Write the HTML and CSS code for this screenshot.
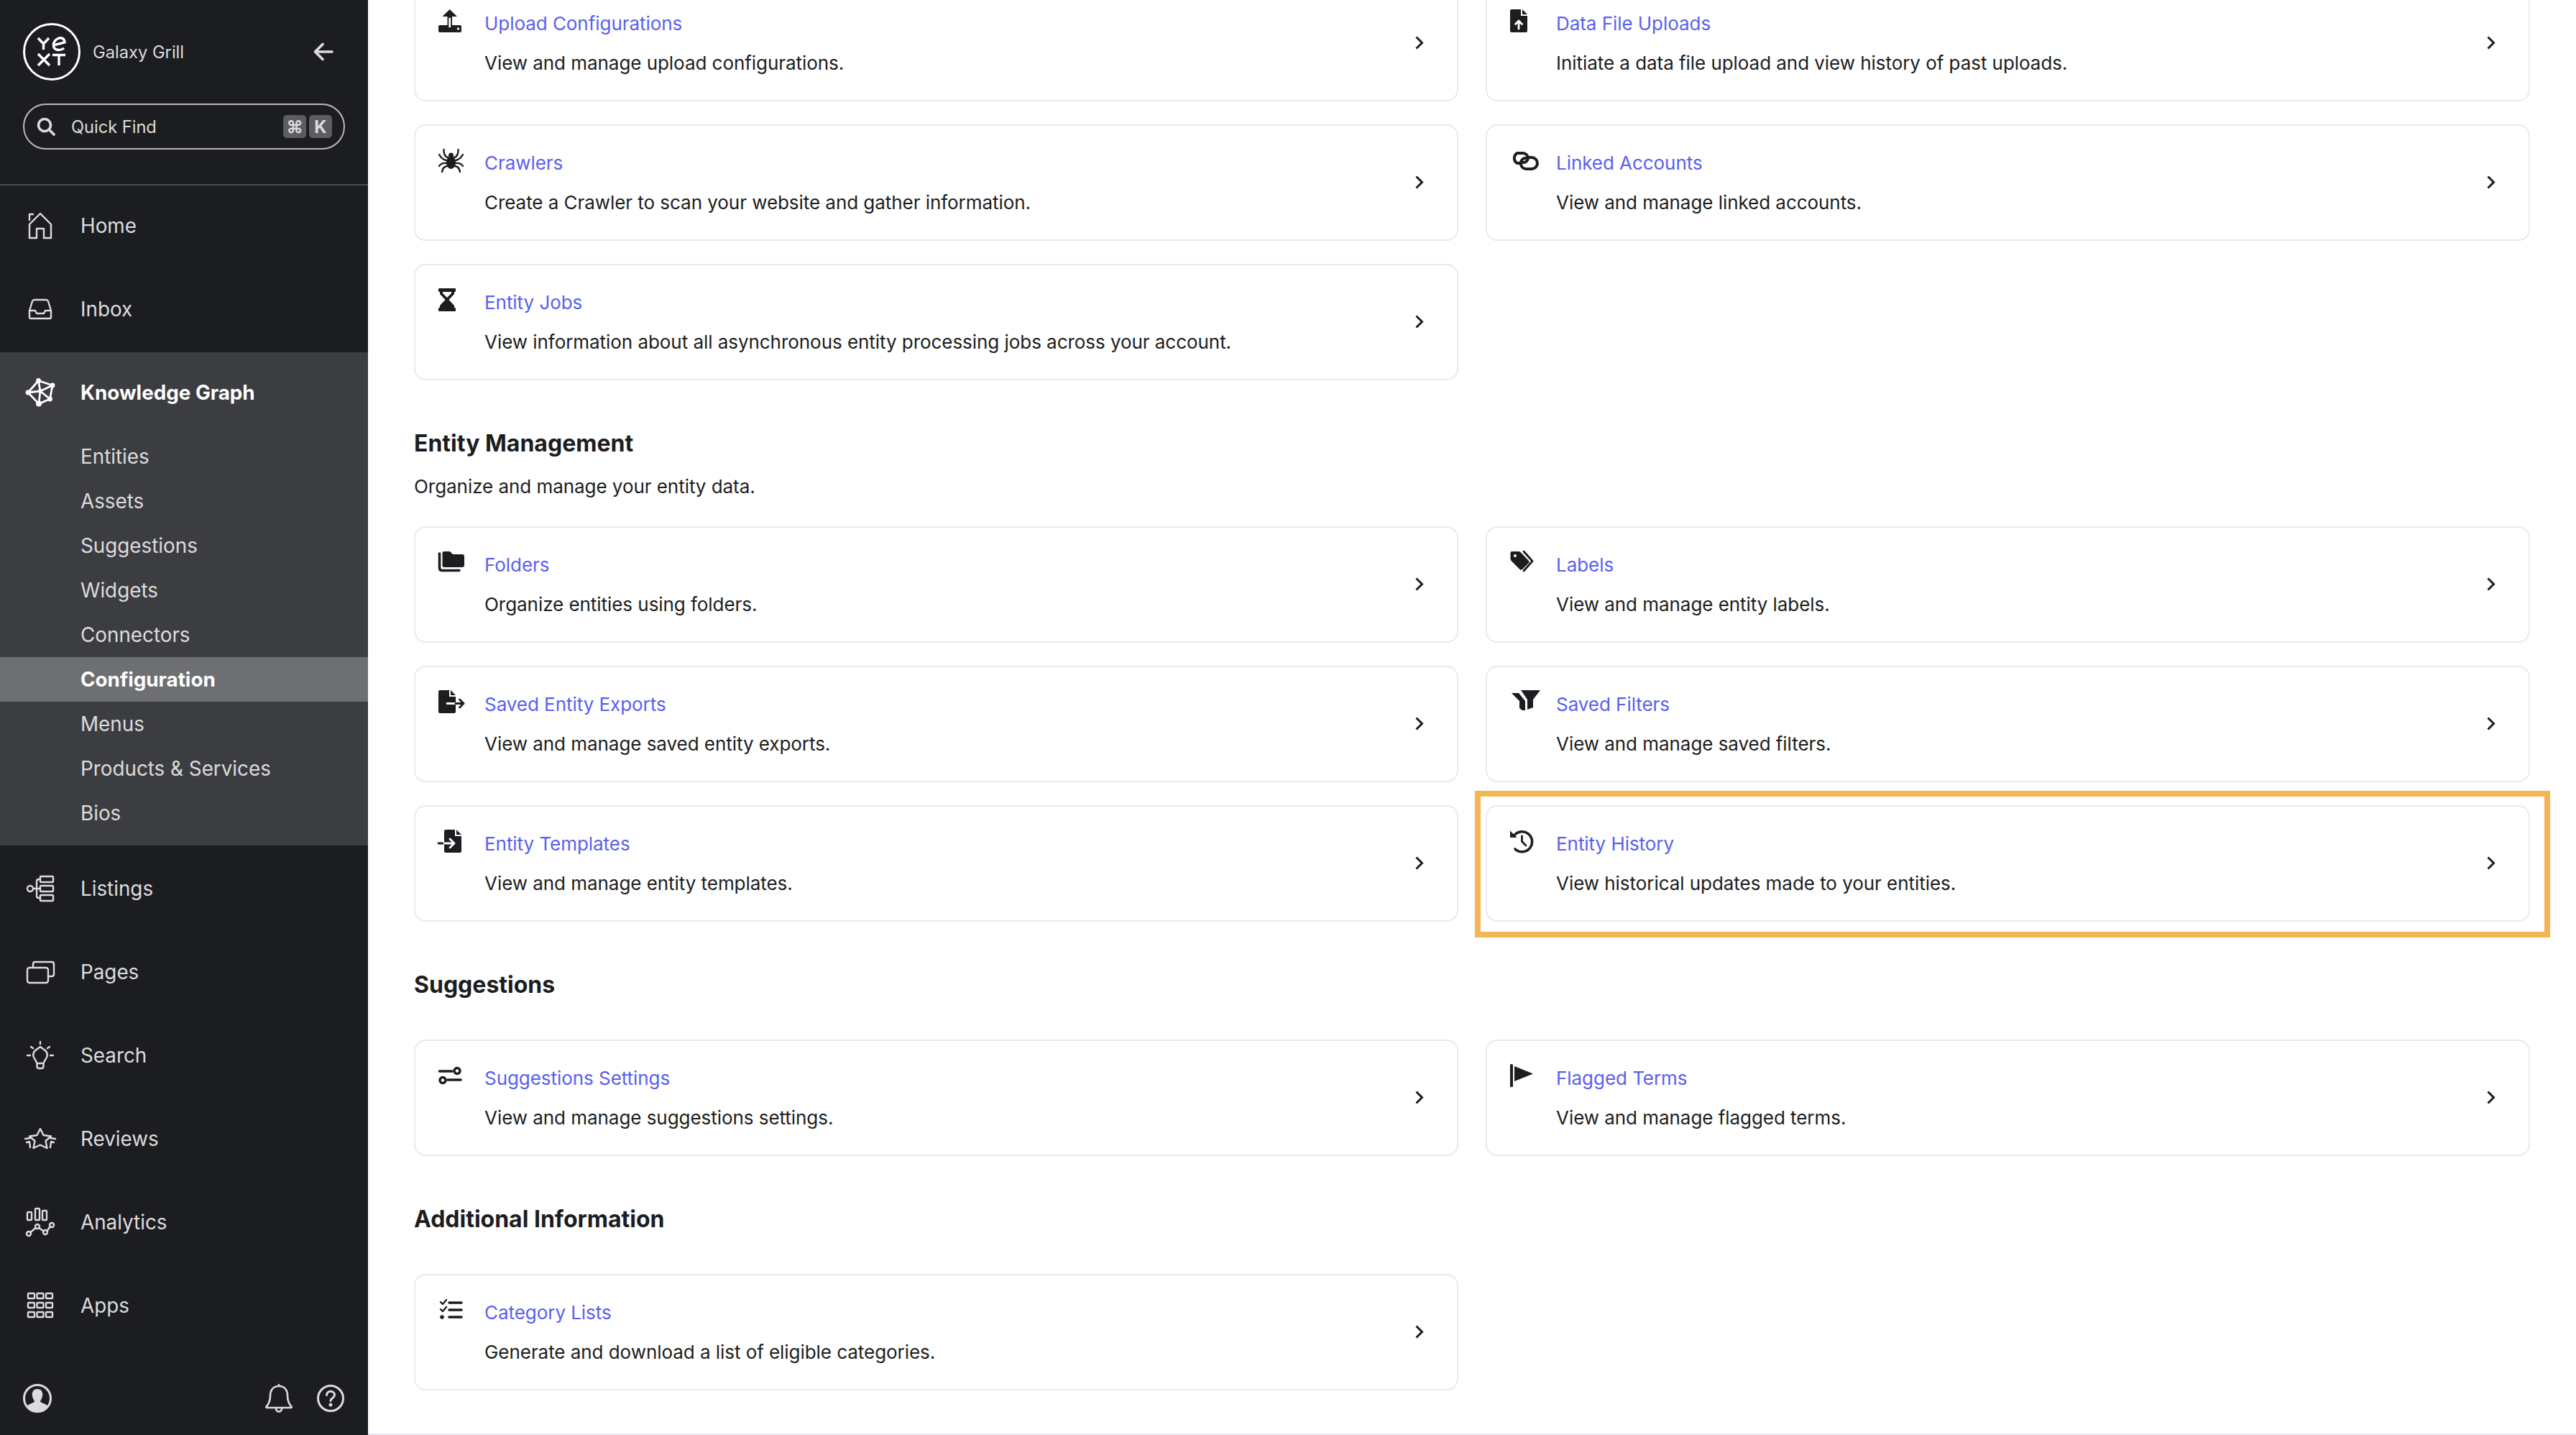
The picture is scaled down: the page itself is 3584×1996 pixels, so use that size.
FILE: index.html
```html
<!DOCTYPE html>
<html lang="en">
<head>
    <meta charset="UTF-8">
    <title>Configuration - Knowledge Graph</title>
    <link rel="stylesheet" href="styles.css">
</head>
<body>
    <aside class="sidebar">
        <div class="side-top">
            <div class="brand">
                <svg class="logo" width="80" height="80" viewBox="0 0 80 80" fill="none" stroke="#fff" stroke-width="3.4">
                    <circle cx="40" cy="40" r="38.5" stroke-width="3"/>
                    <path d="M21 21 L28.5 29 L36 21 M28.5 29 V37"/>
                    <path d="M42 31 L58 27 C58 22 54 20 50 21 C44 23 41 29 43 34 C45 38 52 39 57 35"/>
                    <path d="M21 43 L37 59 M37 43 L21 59 M41 44.5 H59 M50 44.5 V59"/>
                </svg>
                <span class="brand-name">Galaxy Grill</span>
                <svg class="back" width="28" height="26" viewBox="0 0 28 26" fill="none" stroke="#dcdcde" stroke-width="3.6" stroke-linecap="round" stroke-linejoin="round">
                    <path d="M26 13 H3 M13 2.5 L2.5 13 L13 23.5"/>
                </svg>
            </div>
            <div class="quick-find">
                <svg width="26" height="26" viewBox="0 0 26 26" fill="none" stroke="#dcdcde" stroke-width="3.6" stroke-linecap="round">
                    <circle cx="11" cy="11" r="8.5"/>
                    <path d="M17.5 17.5 L24 24"/>
                </svg>
                <span class="quick-label">Quick Find</span>
                <span class="key">⌘</span>
                <span class="key">K</span>
            </div>
        </div>

        <nav class="nav">
            <a class="nav-row">
                <svg class="nav-icon" viewBox="0 0 48 48"><path d="M9 22 L24 7 L39 22 V41 H29 V28 H19 V41 H9 Z M9 16 V8 H14"/></svg>
                Home
            </a>
            <a class="nav-row">
                <svg class="nav-icon" viewBox="0 0 48 48"><path d="M9 26 L13 13 Q14 11 16 11 H32 Q34 11 35 13 L39 26 V35 Q39 37 37 37 H11 Q9 37 9 35 Z M9 26 H17 L19 30 H29 L31 26 H39"/></svg>
                Inbox
            </a>
            <div class="nav-group">
                <a class="nav-row nav-row-open">
                    <svg class="nav-icon kg-icon" viewBox="0 0 48 48">
                        <path d="M21.5 7.5 L41 14 L37.5 33 L22 39.6 L7 24 Z M21.5 7.5 L24 22 L22 39.6 M7 24 L24 22 L41 14 M24 22 L37.5 33"/>
                        <circle cx="21.5" cy="7.5" r="3.4"/><circle cx="41" cy="14" r="3.4"/><circle cx="7" cy="24" r="3.4"/>
                        <circle cx="37.5" cy="33" r="3.4"/><circle cx="22" cy="39.6" r="4"/><circle cx="24" cy="22" r="3"/>
                    </svg>
                    Knowledge Graph
                </a>
                <a class="sub-row">Entities</a>
                <a class="sub-row">Assets</a>
                <a class="sub-row">Suggestions</a>
                <a class="sub-row">Widgets</a>
                <a class="sub-row">Connectors</a>
                <a class="sub-row active">Configuration</a>
                <a class="sub-row">Menus</a>
                <a class="sub-row">Products &amp; Services</a>
                <a class="sub-row">Bios</a>
            </div>
            <a class="nav-row">
                <svg class="nav-icon" viewBox="0 0 48 48">
                    <circle cx="10" cy="24" r="4"/>
                    <rect x="24" y="7" width="18" height="8" rx="1"/><rect x="24" y="20" width="18" height="8" rx="1"/><rect x="24" y="33" width="18" height="8" rx="1"/>
                    <path d="M14 24 H24 M24 11 H22 Q19 11 19 14 V34 Q19 37 22 37 H24"/>
                </svg>
                Listings
            </a>
            <a class="nav-row">
                <svg class="nav-icon" viewBox="0 0 48 48">
                    <rect x="6" y="18" width="29" height="21" rx="3"/>
                    <path d="M14 18 V13 Q14 10 17 10 H40 Q43 10 43 13 V27 Q43 30 40 30 H35"/>
                </svg>
                Pages
            </a>
            <a class="nav-row">
                <svg class="nav-icon" viewBox="0 0 48 48">
                    <path d="M24 12 L32 18 Q36 24 31 30 L28.5 35 H19.5 L17 30 Q12 24 16 18 Z M19.5 35 V39 Q19.5 42 22 42 H26 Q28.5 42 28.5 39 V35"/>
                    <path d="M24 5 V8 M6 24 H10 M38 24 H42 M11 12 L14 14 M37 12 L34 14"/>
                </svg>
                Search
            </a>
            <a class="nav-row">
                <svg class="nav-icon" viewBox="0 0 48 48">
                    <path d="M24 10 L28.5 19 L39 20.5 L31.5 27 L33.5 37 L24 32.5 L14.5 37 L16.5 27 L9 20.5 L19.5 19 Z"/>
                    <path d="M3 24 L10 23 M5 29 L9 28 L10 36 M45 24 L38 23 M43 29 L39 28 L38 36"/>
                </svg>
                Reviews
            </a>
            <a class="nav-row">
                <svg class="nav-icon" viewBox="0 0 48 48">
                    <rect x="6" y="10" width="6" height="11" rx="1"/><rect x="17" y="5" width="6" height="16" rx="1"/><rect x="27" y="8" width="6" height="13" rx="1"/>
                    <circle cx="8" cy="40" r="3"/><circle cx="20" cy="30" r="3"/><circle cx="31" cy="38" r="3"/><circle cx="40" cy="28" r="3"/>
                    <path d="M10.5 38 L17.5 32 M22.5 32 L28.5 36.5 M33.5 36.5 L37.5 30"/>
                </svg>
                Analytics
            </a>
            <a class="nav-row">
                <svg class="nav-icon" viewBox="0 0 48 48">
                    <rect x="7" y="7" width="9" height="7" rx="1"/><rect x="19.5" y="7" width="9" height="7" rx="1"/><rect x="32" y="7" width="9" height="7" rx="1"/>
                    <rect x="7" y="20" width="9" height="7" rx="1"/><rect x="19.5" y="20" width="9" height="7" rx="1"/><rect x="32" y="20" width="9" height="7" rx="1"/>
                    <rect x="7" y="33" width="9" height="7" rx="1"/><rect x="19.5" y="33" width="9" height="7" rx="1"/><rect x="32" y="33" width="9" height="7" rx="1"/>
                </svg>
                Apps
            </a>
        </nav>

        <div class="side-foot">
            <svg width="40" height="40" viewBox="0 0 40 40">
                <circle cx="20" cy="20" r="18.5" fill="none" stroke="#dcdcde" stroke-width="3"/>
                <path d="M20 7 C26 7 28 12 27 17 C26.5 20 25 22 24 24 C24 26 30 27 34 30 C30 36 25 38.5 20 38.5 C15 38.5 10 36 6 30 C10 27 16 26 16 24 C15 22 13.5 20 13 17 C12 12 14 7 20 7 Z" fill="#dcdcde"/>
            </svg>
            <div class="foot-right">
                <svg width="40" height="40" viewBox="0 0 40 40" fill="none" stroke="#dcdcde" stroke-width="2.6" stroke-linejoin="round" stroke-linecap="round">
                    <path d="M20 3 C11 3 8 10 8 16 C8 24 6 28 2.5 31.5 Q2 33 3.5 33 H36.5 Q38 33 37.5 31.5 C34 28 32 24 32 16 C32 10 29 3 20 3 Z M20 1 V3 M16 35 Q17 38.5 20 38.5 Q23 38.5 24 35"/>
                </svg>
                <svg width="40" height="40" viewBox="0 0 40 40" fill="none" stroke="#dcdcde" stroke-width="3" stroke-linecap="round">
                    <circle cx="20" cy="20" r="17.5"/>
                    <path d="M14.5 15.5 C14.5 8.5 25.5 8.5 25.5 15.5 C25.5 19.5 20 19.5 20 23.5"/>
                    <circle cx="20" cy="29" r="1" fill="#dcdcde"/>
                </svg>
            </div>
        </div>
    </aside>

    <main class="main">
        <div class="card-grid first-grid">
            <a class="card">
                <svg class="card-icon" viewBox="0 0 40 32">
                    <rect y="22" width="32" height="10" rx="2"/>
                    <path d="M15.7 0 L26 10 H19 V25 H12.5 V10 H5.4 Z"/>
                    <path class="cut" d="M15.7 13 V24"/>
                    <circle class="hole" cx="27.5" cy="27" r="1.7"/>
                </svg>
                <div class="card-text">
                    <div class="card-title">Upload Configurations</div>
                    <div class="card-desc">View and manage upload configurations.</div>
                </div>
                <svg class="chevron" viewBox="0 0 12 20"><path d="M1.5 1.5 L9.5 9.5 L1.5 17.5"/></svg>
            </a>
            <a class="card">
                <svg class="card-icon" viewBox="0 0 40 32">
                    <path d="M2 0 H15 V9 H24 V30 Q24 32 22 32 H2 Q0 32 0 30 V2 Q0 0 2 0 Z M17 0 L24 7 H17 Z"/>
                    <path class="cut" d="M12 27 V16 M7.5 20.5 L12 16 L16.5 20.5"/>
                </svg>
                <div class="card-text">
                    <div class="card-title">Data File Uploads</div>
                    <div class="card-desc">Initiate a data file upload and view history of past uploads.</div>
                </div>
                <svg class="chevron" viewBox="0 0 12 20"><path d="M1.5 1.5 L9.5 9.5 L1.5 17.5"/></svg>
            </a>
            <a class="card">
                <svg class="card-icon" viewBox="0 0 40 32">
                    <ellipse cx="17.5" cy="19" rx="6.5" ry="9"/>
                    <circle cx="17.5" cy="9" r="3.5"/>
                    <path class="line" d="M13 12 Q7 10 7.5 1 M11 16 Q5 15 1 8 M11 20 Q4 19 1 24 M12 24 Q6 25 5 32 M22 12 Q28 10 27.5 1 M24 16 Q30 15 34 8 M24 20 Q31 19 34 24 M23 24 Q29 25 30 32"/>
                </svg>
                <div class="card-text">
                    <div class="card-title">Crawlers</div>
                    <div class="card-desc">Create a Crawler to scan your website and gather information.</div>
                </div>
                <svg class="chevron" viewBox="0 0 12 20"><path d="M1.5 1.5 L9.5 9.5 L1.5 17.5"/></svg>
            </a>
            <a class="card">
                <svg class="card-icon" viewBox="0 0 40 32">
                    <path class="line thick" d="M14 20 H10 A8 8 0 0 1 10 6 H17 A7.5 7.5 0 0 1 25 13 A6.5 6.5 0 0 1 18 19"/>
                    <path class="line thick" d="M26 12 H30 A8 8 0 0 1 30 28 H23 A7.5 7.5 0 0 1 15 20 A6.5 6.5 0 0 1 22 13"/>
                </svg>
                <div class="card-text">
                    <div class="card-title">Linked Accounts</div>
                    <div class="card-desc">View and manage linked accounts.</div>
                </div>
                <svg class="chevron" viewBox="0 0 12 20"><path d="M1.5 1.5 L9.5 9.5 L1.5 17.5"/></svg>
            </a>
            <a class="card">
                <svg class="card-icon" viewBox="0 0 40 32">
                    <rect width="24" height="5" rx="1"/>
                    <rect y="27" width="24" height="5" rx="1"/>
                    <path d="M2 5 H22 V8 L14.5 16 L22 24 V27 H2 V24 L9.5 16 L2 8 Z"/>
                    <path class="hole" d="M6 5 H18 V7 L12 13 L6 7 Z"/>
                </svg>
                <div class="card-text">
                    <div class="card-title">Entity Jobs</div>
                    <div class="card-desc">View information about all asynchronous entity processing jobs across your account.</div>
                </div>
                <svg class="chevron" viewBox="0 0 12 20"><path d="M1.5 1.5 L9.5 9.5 L1.5 17.5"/></svg>
            </a>
        </div>

        <h2 class="section-title">Entity Management</h2>
        <p class="section-sub">Organize and manage your entity data.</p>
        <div class="card-grid">
            <a class="card">
                <svg class="card-icon" viewBox="0 0 40 32">
                    <path d="M8 1 H16 L20 5 H33 Q36 5 36 8 V20 Q36 23 33 23 H8 Q5.5 23 5.5 21 V3 Q5.5 1 8 1 Z"/>
                    <path class="line thin" d="M1.5 4 V24 Q1.5 27.5 5 27.5 H29"/>
                </svg>
                <div class="card-text">
                    <div class="card-title">Folders</div>
                    <div class="card-desc">Organize entities using folders.</div>
                </div>
                <svg class="chevron" viewBox="0 0 12 20"><path d="M1.5 1.5 L9.5 9.5 L1.5 17.5"/></svg>
            </a>
            <a class="card">
                <svg class="card-icon" viewBox="0 0 40 32">
                    <path d="M2.5 1 H12 Q13.5 1 14.5 2 L26 14 Q27 15.5 26 17 L17 26 Q15 27.5 13.5 26 L2 14.5 Q0.5 13 0.5 11 V3 Q0.5 1 2.5 1 Z"/>
                    <circle class="hole" cx="7" cy="7" r="2"/>
                    <path class="line slim" d="M19 1 L31 14.5 L19 28"/>
                </svg>
                <div class="card-text">
                    <div class="card-title">Labels</div>
                    <div class="card-desc">View and manage entity labels.</div>
                </div>
                <svg class="chevron" viewBox="0 0 12 20"><path d="M1.5 1.5 L9.5 9.5 L1.5 17.5"/></svg>
            </a>
            <a class="card">
                <svg class="card-icon" viewBox="0 0 40 32">
                    <path d="M2 0 H15 V9 H24 V30 Q24 32 22 32 H2 Q0 32 0 30 V2 Q0 0 2 0 Z M17 0 L24 7 H17 Z"/>
                    <path class="cut" d="M12 18.5 H24"/>
                    <path class="line slim" d="M24 18.5 H35 M29.5 13 L35 18.5 L29.5 24"/>
                </svg>
                <div class="card-text">
                    <div class="card-title">Saved Entity Exports</div>
                    <div class="card-desc">View and manage saved entity exports.</div>
                </div>
                <svg class="chevron" viewBox="0 0 12 20"><path d="M1.5 1.5 L9.5 9.5 L1.5 17.5"/></svg>
            </a>
            <a class="card">
                <svg class="card-icon" viewBox="0 0 40 32">
                    <path d="M15 0 H42 L32 13 V24 L24 27 V13 Z"/>
                    <path d="M2 4 H12 L21 15 V28 H17 L13 25 V15 Z"/>
                </svg>
                <div class="card-text">
                    <div class="card-title">Saved Filters</div>
                    <div class="card-desc">View and manage saved filters.</div>
                </div>
                <svg class="chevron" viewBox="0 0 12 20"><path d="M1.5 1.5 L9.5 9.5 L1.5 17.5"/></svg>
            </a>
            <a class="card">
                <svg class="card-icon" viewBox="0 0 40 32">
                    <path d="M10 0 H23 V9 H32 V30 Q32 32 30 32 H10 Q8 32 8 30 V2 Q8 0 10 0 Z M25 0 L32 7 H25 Z"/>
                    <path class="line slim" d="M0 19 H8"/>
                    <path class="cut" d="M8 19 H22 M16 13 L22 19 L16 25"/>
                </svg>
                <div class="card-text">
                    <div class="card-title">Entity Templates</div>
                    <div class="card-desc">View and manage entity templates.</div>
                </div>
                <svg class="chevron" viewBox="0 0 12 20"><path d="M1.5 1.5 L9.5 9.5 L1.5 17.5"/></svg>
            </a>
            <a class="card">
                <svg class="card-icon" viewBox="0 0 40 32">
                    <path class="line thin" d="M5 9 A14 14 0 1 1 7 27"/>
                    <path d="M0 1.5 V11 H9.5 Z"/>
                    <path class="line slim" d="M16.5 9 V16.5 L22 22"/>
                </svg>
                <div class="card-text">
                    <div class="card-title">Entity History</div>
                    <div class="card-desc">View historical updates made to your entities.</div>
                </div>
                <svg class="chevron" viewBox="0 0 12 20"><path d="M1.5 1.5 L9.5 9.5 L1.5 17.5"/></svg>
            </a>
        </div>

        <h2 class="section-title no-sub">Suggestions</h2>
        <div class="card-grid">
            <a class="card">
                <svg class="card-icon" viewBox="0 0 40 32">
                    <path class="line thin" d="M1.5 10 H19 M13 22 H31"/>
                    <circle class="ring" cx="26" cy="9.5" r="4"/>
                    <circle class="ring" cx="6" cy="22.5" r="4"/>
                </svg>
                <div class="card-text">
                    <div class="card-title">Suggestions Settings</div>
                    <div class="card-desc">View and manage suggestions settings.</div>
                </div>
                <svg class="chevron" viewBox="0 0 12 20"><path d="M1.5 1.5 L9.5 9.5 L1.5 17.5"/></svg>
            </a>
            <a class="card">
                <svg class="card-icon" viewBox="0 0 40 32">
                    <rect width="4" height="32" rx="1.5"/>
                    <path d="M6 3 L32 13.5 L6 24 Z"/>
                </svg>
                <div class="card-text">
                    <div class="card-title">Flagged Terms</div>
                    <div class="card-desc">View and manage flagged terms.</div>
                </div>
                <svg class="chevron" viewBox="0 0 12 20"><path d="M1.5 1.5 L9.5 9.5 L1.5 17.5"/></svg>
            </a>
        </div>

        <h2 class="section-title no-sub">Additional Information</h2>
        <div class="card-grid">
            <a class="card">
                <svg class="card-icon" viewBox="0 0 40 32">
                    <path class="line thin" d="M15 6 H32 M15 16 H32 M15 26 H32"/>
                    <path class="line" d="M3 5 L6 8 L11 2 M3 15 L6 18 L11 12"/>
                    <circle cx="5" cy="26" r="2.8"/>
                </svg>
                <div class="card-text">
                    <div class="card-title">Category Lists</div>
                    <div class="card-desc">Generate and download a list of eligible categories.</div>
                </div>
                <svg class="chevron" viewBox="0 0 12 20"><path d="M1.5 1.5 L9.5 9.5 L1.5 17.5"/></svg>
            </a>
        </div>
    </main>

    <div class="highlight"></div>
</body>
</html>
```

FILE: styles.css
```css
body {
    font-family: Inter, "Noto Sans", sans-serif;
    margin: 0;
    width: 3584px;
    height: 1996px;
    overflow: hidden;
    display: flex;
    position: relative;
    background-color: white;
    color: #1c1d20;
}

/* sidebar */
.sidebar {
    width: 512px;
    flex-shrink: 0;
    height: 1996px;
    display: flex;
    flex-direction: column;
    background-color: #1c1d20;
    color: #dcdcde;
}

.side-top {
    height: 224px;
    padding: 32px 32px 0;
    border-bottom: 2px solid #4c4d51;
    margin-bottom: -2px;
}

.brand {
    display: flex;
    align-items: center;
    height: 80px;
}

.brand-name {
    margin-left: 17px;
    font-size: 23.7px;
    flex: 1;
}

.back {
    margin-right: 16px;
}

.quick-find {
    display: flex;
    align-items: center;
    height: 64px;
    box-sizing: border-box;
    margin-top: 32px;
    padding: 0 16px 0 17px;
    border: 2px solid #b9b9bc;
    border-radius: 32px;
}

.quick-label {
    margin-left: 22px;
    font-size: 23.6px;
    flex: 1;
}

.key {
    width: 32px;
    height: 32px;
    margin-left: 4px;
    display: flex;
    align-items: center;
    justify-content: center;
    background-color: #5c5d61;
    border-radius: 5px;
    font-size: 24px;
    font-weight: 700;
}

.nav-row {
    display: flex;
    align-items: center;
    height: 116px;
    padding-left: 32px;
    font-size: 27.8px;
}

.nav-icon {
    width: 48px;
    height: 48px;
    margin-right: 32px;
    flex-shrink: 0;
    fill: none;
    stroke: #dcdcde;
    stroke-width: 2.4;
    stroke-linejoin: round;
    stroke-linecap: round;
}

.kg-icon {
    stroke: white;
    stroke-width: 2.8;
}

.kg-icon circle {
    fill: white;
    stroke: none;
}

.nav-group {
    background-color: #3c3d41;
    margin: 2px 0;
    padding-bottom: 14px;
}

.nav-row-open {
    height: 112px;
    padding-bottom: 2px;
    font-weight: 700;
    color: white;
}

.sub-row {
    display: flex;
    align-items: center;
    height: 62px;
    padding-left: 112px;
    font-size: 27.8px;
}

.sub-row.active {
    background-color: #6e6f73;
    color: white;
    font-weight: 700;
}

.side-foot {
    margin-top: auto;
    padding: 0 32px 31px;
    display: flex;
    justify-content: space-between;
}

.foot-right {
    display: flex;
    gap: 32px;
}

/* main */
.main {
    flex: 1;
    box-sizing: border-box;
    height: 1996px;
    padding: 0 64px;
    overflow: hidden;
    border-bottom: 2px solid #e9e9ef;
}

.card-grid {
    display: grid;
    grid-template-columns: 1fr 1fr;
    column-gap: 38px;
    row-gap: 32px;
}

.first-grid {
    margin-top: -21px;
}

.section-title {
    margin: 68px 0 22px;
    font-size: 32px;
    line-height: 40px;
    font-weight: 700;
}

.section-title.no-sub {
    margin-bottom: 56px;
}

.section-sub {
    margin: 0 0 37px;
    font-size: 26px;
    letter-spacing: -0.05px;
    line-height: 36px;
}

.card {
    display: flex;
    align-items: flex-start;
    height: 162px;
    box-sizing: border-box;
    padding: 32px 46px 0 32px;
    border: 2px solid #e9e9ef;
    border-radius: 16px;
    background-color: white;
}

.card-icon {
    width: 40px;
    height: 32px;
    margin-right: 24px;
    flex-shrink: 0;
    fill: #1c1d20;
    overflow: visible;
}

.card-icon .line {
    fill: none;
    stroke: #1c1d20;
    stroke-width: 2.4;
    stroke-linecap: round;
    stroke-linejoin: round;
}

.card-icon .thick {
    stroke-width: 4;
}

.card-icon .thin {
    stroke-width: 3.6;
}

.card-icon .slim {
    stroke-width: 2.8;
}

.card-icon .cut {
    fill: none;
    stroke: white;
    stroke-width: 2.8;
    stroke-linecap: round;
    stroke-linejoin: round;
}

.card-icon .hole {
    fill: white;
}

.card-icon .ring {
    fill: white;
    stroke: #1c1d20;
    stroke-width: 3.4;
}

.card-text {
    flex: 1;
    margin-top: 2px;
    font-size: 26px;
    letter-spacing: -0.05px;
    line-height: 36px;
}

.card-title {
    color: #5a5ff0;
    margin-bottom: 19px;
}

.chevron {
    width: 12px;
    height: 20px;
    align-self: center;
    margin-top: -32px;
    fill: none;
    stroke: #1c1d20;
    stroke-width: 3;
}

/* annotation box drawn on top of the screenshot */
.highlight {
    position: absolute;
    left: 2052px;
    top: 1100px;
    width: 1496px;
    height: 204px;
    box-sizing: border-box;
    border: 8px solid #f4b557;
}
```
